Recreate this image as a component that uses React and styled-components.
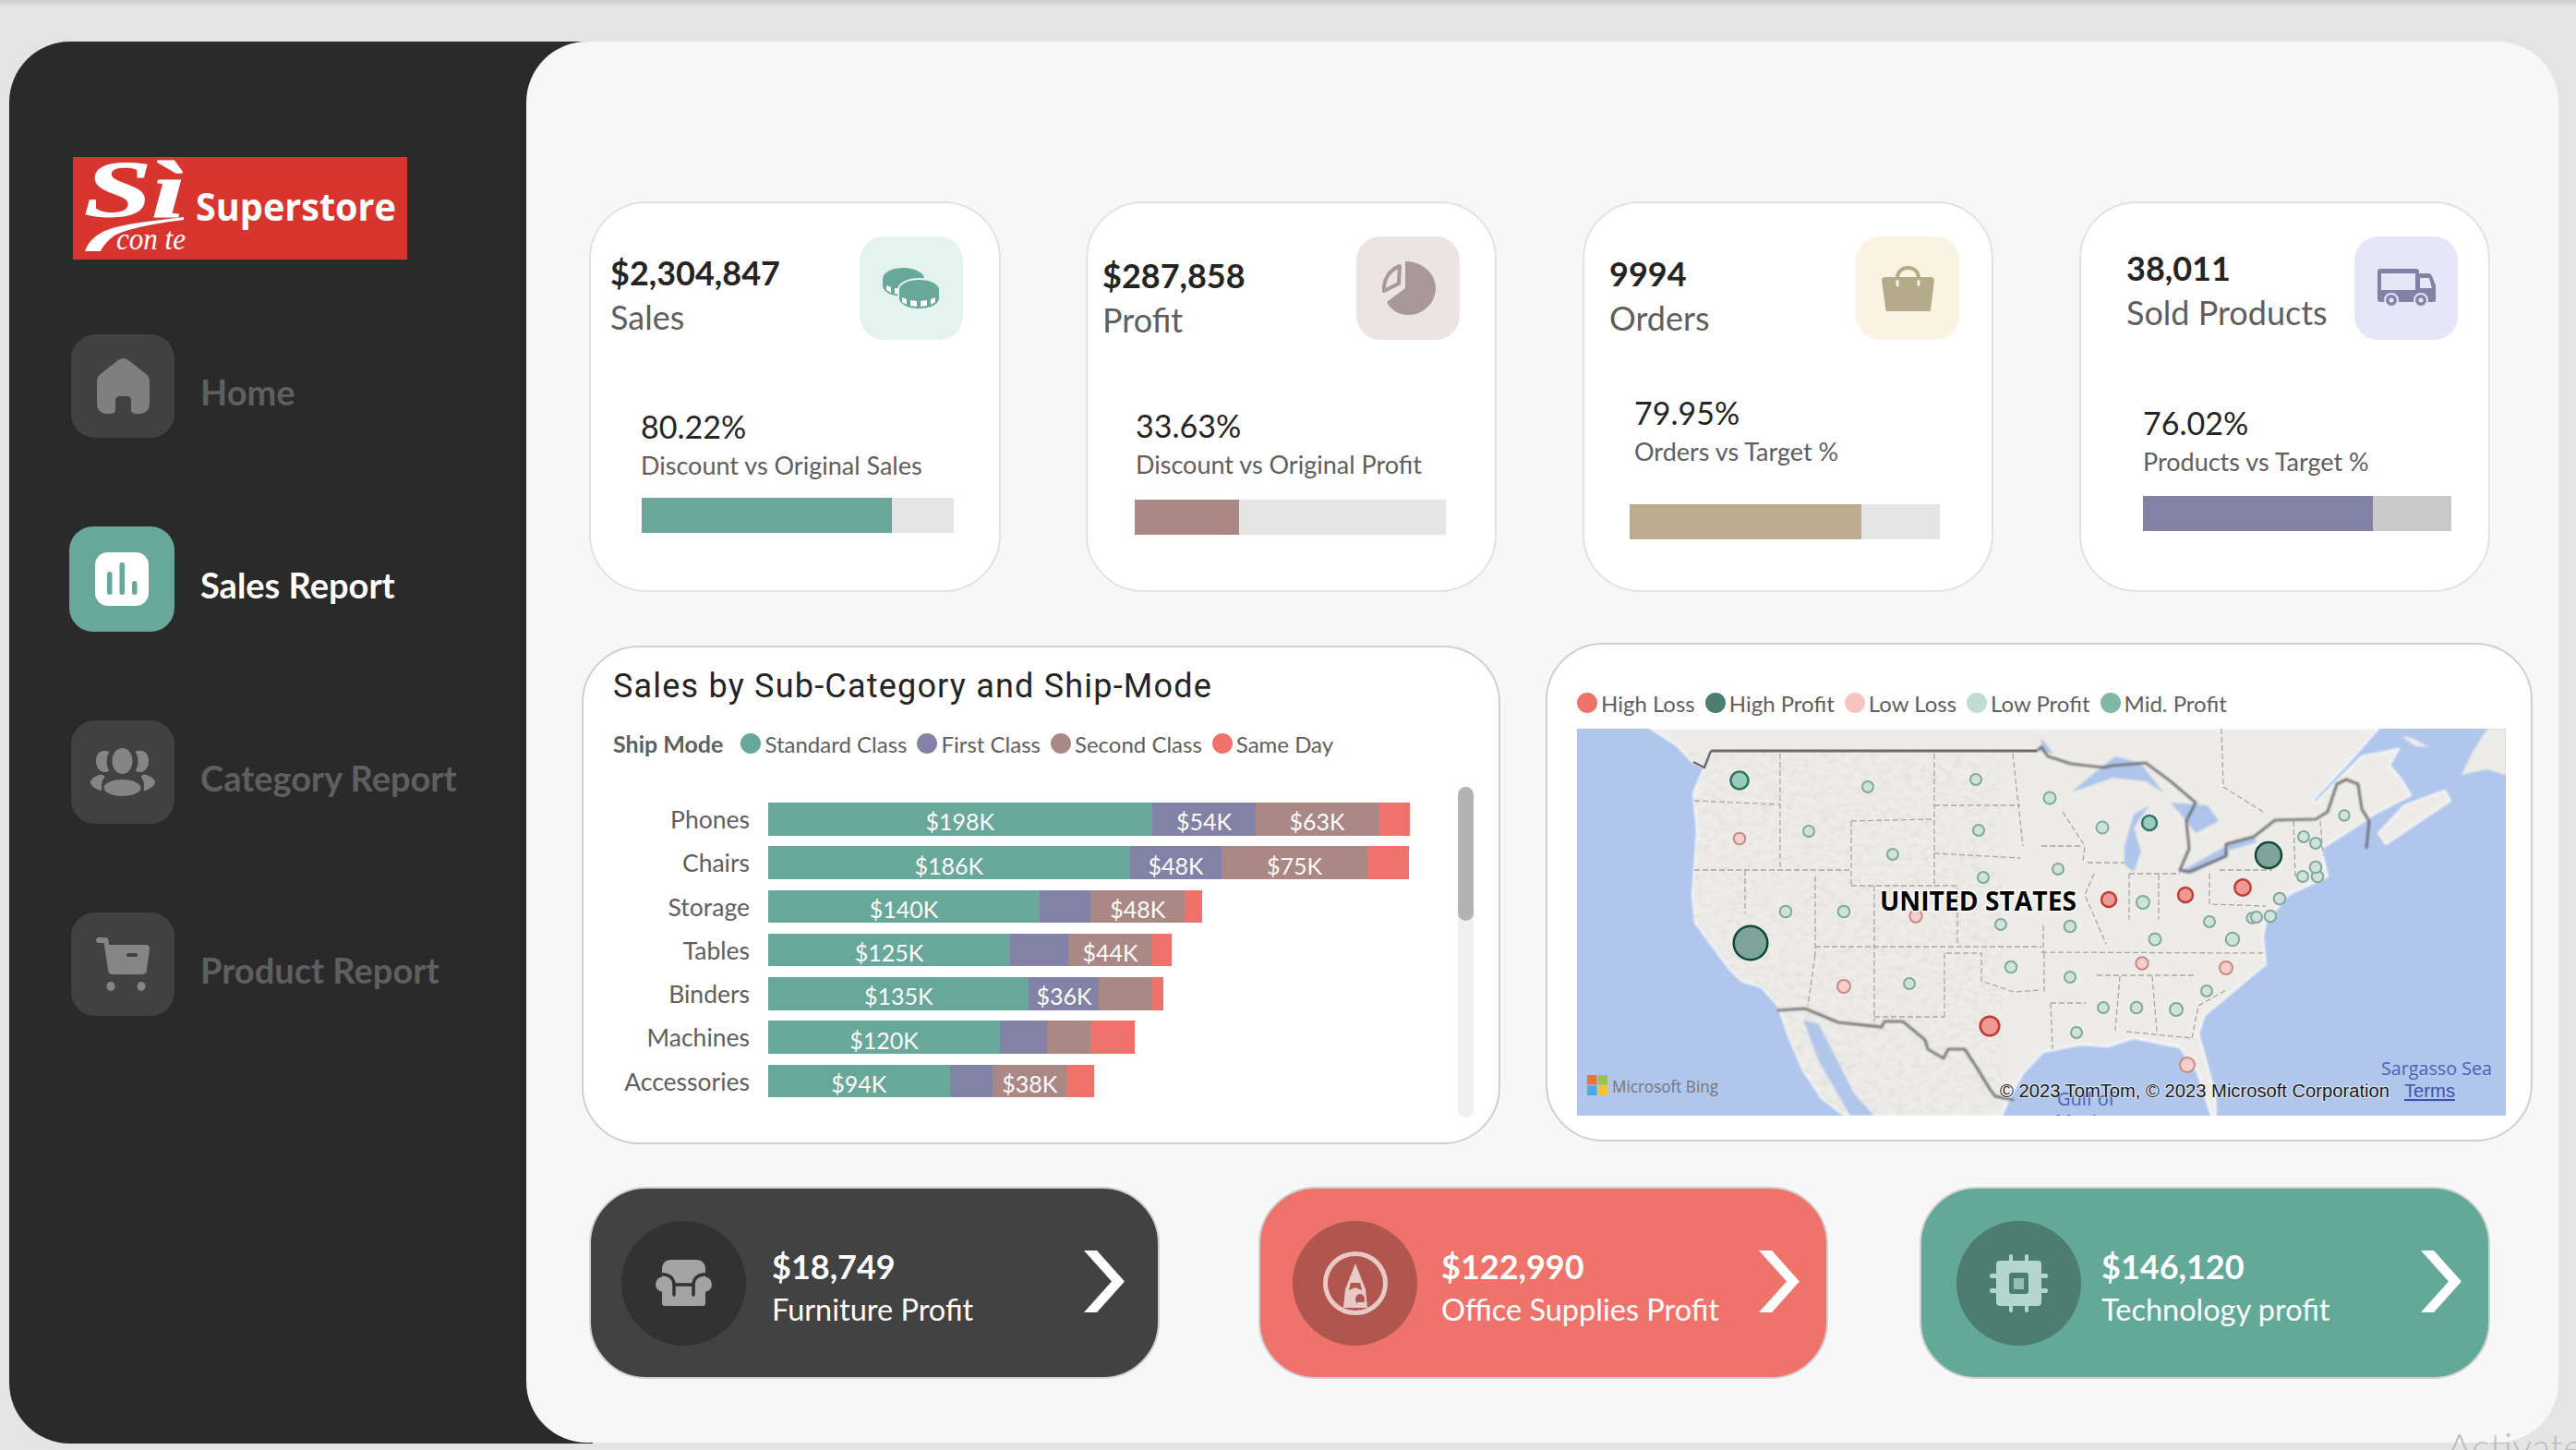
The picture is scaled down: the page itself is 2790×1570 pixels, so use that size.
import styled, { createGlobalStyle } from 'styled-components';

const GlobalStyle = createGlobalStyle`
  html, body {
    margin: 0;
    padding: 0;
    background: #e4e4e4;
  }
  * {
    box-sizing: border-box;
  }
`;

const FONT = "Lato, 'Open Sans', sans-serif";

const SPage = styled.div`
  position: relative;
  display: flex;
  width: 2790px;
  height: 1570px;
  padding: 45px 0 0 10px;
  overflow: hidden;
  font-family: ${FONT};
  background: linear-gradient(#cbcbcb 0, #e4e4e4 7px);
`;

const SSidebar = styled.aside`
  flex: none;
  width: 632px;
  height: 1518px;
  padding: 125px 0 0 69px;
  background: #2a2a2a;
  border-radius: 66px 0 0 66px;
`;

const SLogo = styled.svg`
  display: block;
  width: 362px;
  height: 111px;
  margin-bottom: 81px;
  overflow: visible;
`;

const SNavList = styled.nav`
  display: flex;
  flex-direction: column;
  gap: 96px;
`;

const SNavItem = styled.div`
  display: flex;
  align-items: center;
  gap: 28px;
  margin-left: ${(p) => (p.$active ? '-4px' : '-2px')};
`;

const STile = styled.div`
  display: flex;
  align-items: center;
  justify-content: center;
  width: ${(p) => (p.$active ? '114px' : '112px')};
  height: ${(p) => (p.$active ? '114px' : '112px')};
  background: ${(p) => (p.$active ? '#68a89a' : '#414141')};
  border-radius: 26px;
`;

const SNavText = styled.span`
  padding-top: 11px;
  font-size: 38px;
  font-weight: 700;
  color: ${(p) => (p.$active ? '#ffffff' : '#5f5f5f')};
`;

const SMain = styled.main`
  flex: none;
  width: 2201px;
  height: 1517px;
  margin-left: -72px;
  padding-top: 173px;
  background: #f7f7f7;
  border-radius: 66px;
`;

const SKpiRow = styled.section`
  display: flex;
  padding-left: 68px;
`;

const SKpiCard = styled.article`
  flex: none;
  width: ${(p) => p.$width}px;
  height: 423px;
  margin-left: ${(p) => p.$gap}px;
  background: #ffffff;
  border: 2px solid #e2e2e2;
  border-radius: 62px;
`;

const SKpiHead = styled.div`
  display: flex;
  justify-content: space-between;
  padding: 36px ${(p) => p.$right}px 0 ${(p) => p.$left}px;
`;

const SKpiTitle = styled.div`
  margin-top: ${(p) => p.$top}px;
`;

const SKpiValue = styled.div`
  font-size: 36px;
  line-height: 48px;
  font-weight: 700;
  color: #252423;
`;

const SKpiLabel = styled.div`
  font-size: 36px;
  line-height: 48px;
  color: #605e5c;
`;

const SKpiIcon = styled.div`
  display: flex;
  flex: none;
  align-items: center;
  justify-content: center;
  width: 112px;
  height: 112px;
  background: ${(p) => p.$bg};
  border-radius: 26px;
`;

const SKpiBody = styled.div`
  margin: ${(p) => p.$top}px 0 0 ${(p) => p.$left}px;
`;

const SKpiPercent = styled.div`
  font-size: 34px;
  line-height: 44px;
  color: #252423;
`;

const SKpiSub = styled.div`
  font-size: 27px;
  line-height: 40px;
  color: #605e5c;
`;

const SBarTrack = styled.div`
  width: ${(p) => p.$width}px;
  height: 38px;
  margin: ${(p) => p.$top}px 0 0 ${(p) => p.$left}px;
  background: ${(p) => p.$track};
`;

const SBarFill = styled.div`
  height: 100%;
  background: ${(p) => p.$color};
`;

const SMiddleRow = styled.section`
  display: flex;
  align-items: flex-start;
  gap: 49px;
  margin-top: 55px;
  padding-left: 60px;
`;

const SPanel = styled.article`
  flex: none;
  height: 540px;
  background: #ffffff;
  border: 2px solid #cfcfcf;
  border-radius: 62px;
`;

const SChartPanel = styled(SPanel)`
  width: 995px;
  margin-top: 3px;
  padding: 20px 0 0 32px;
`;

const SChartTitle = styled.h2`
  margin: 0;
  font-family: Roboto, sans-serif;
  font-size: 36px;
  line-height: 44px;
  font-weight: 400;
  letter-spacing: 1.2px;
  color: #252423;
`;

const SLegend = styled.div`
  display: flex;
  align-items: center;
  height: 30px;
  margin-top: ${(p) => p.$top || 0}px;
  font-size: 24px;
  color: #605e5c;
`;

const SLegendTitle = styled.span`
  margin-right: 19px;
  font-size: 25px;
  font-weight: 700;
`;

const SLegendItem = styled.span`
  display: flex;
  align-items: center;
  gap: 4px;
  margin-right: 11px;
  white-space: nowrap;
`;

const SDot = styled.i`
  display: block;
  width: 22px;
  height: 22px;
  background: ${(p) => p.$color};
  border-radius: 50%;
`;

const SChartBody = styled.div`
  display: flex;
  margin: 32px 0 0 -32px;
`;

const SPlot = styled.div`
  display: grid;
  grid-auto-rows: 35.5px;
  row-gap: 11.8px;
  width: 947px;
  padding-top: 17px;
`;

const SPlotRow = styled.div`
  display: flex;
  align-items: stretch;
`;

const SRowLabel = styled.span`
  flex: none;
  width: 180px;
  margin-right: 20px;
  font-size: 26.5px;
  line-height: 37px;
  text-align: right;
  color: #605e5c;
`;

const SSegment = styled.div`
  display: flex;
  align-items: center;
  justify-content: center;
  padding-top: 5px;
  font-size: 25px;
  color: #ffffff;
  background: ${(p) => p.$color};
`;

const SScrollTrack = styled.div`
  flex: none;
  width: 17px;
  height: 358px;
  background: #f0f0f0;
  border-radius: 9px;
`;

const SScrollThumb = styled.div`
  height: 145px;
  background: #b3b3b3;
  border-radius: 9px;
`;

const SMapPanel = styled(SPanel)`
  width: 1069px;
  padding: 48px 0 0 32px;
`;

const SMapSvg = styled.svg`
  display: block;
  width: 1006px;
  height: 419px;
  margin-top: 13px;
`;

const SBottomRow = styled.section`
  display: flex;
  margin-top: 46px;
  padding-left: 68px;
`;

const SProfitCard = styled.article`
  display: flex;
  flex: none;
  align-items: center;
  width: ${(p) => p.$width}px;
  height: 208px;
  margin-left: ${(p) => p.$gap}px;
  padding: 0 ${(p) => p.$right}px 0 ${(p) => p.$left}px;
  color: #ffffff;
  background: ${(p) => p.$bg};
  border: 2px solid #cfcfcf;
  border-radius: 62px;
`;

const SProfitCircle = styled.div`
  display: flex;
  flex: none;
  align-items: center;
  justify-content: center;
  width: 135px;
  height: 135px;
  background: ${(p) => p.$bg};
  border-radius: 50%;
`;

const SProfitText = styled.div`
  flex: 1;
  margin: 9px 0 0 ${(p) => p.$gap}px;
`;

const SProfitValue = styled.div`
  font-size: 36px;
  line-height: 47px;
  font-weight: 700;
`;

const SProfitLabel = styled.div`
  font-size: 32.5px;
  line-height: 45px;
`;

const SChevron = styled.svg`
  display: block;
  flex: none;
  width: 44px;
  height: 67px;
  margin-bottom: 3px;
`;

const SWatermark = styled.div`
  position: absolute;
  left: 2650px;
  top: 1541px;
  font-size: 42px;
  font-weight: 300;
  color: #bdbdbd;
`;

const HomeIcon = () => (
  <svg width="57" height="60" viewBox="0 0 57 60">
    <path fill="#7f7f7f" d="M28.5 0C31 0 32 1 34 2L52 16C55 18 57 21 57 25V49C57 56 52 60 46 60H42C39 60 37 58 37 56V46C37 42 35 41 32 41H25C22 41 20 43 20 46V56C20 58 18 60 15 60H11C5 60 0 56 0 49V25C0 21 2 18 5 16L23 2C25 1 26 0 28.5 0Z" />
  </svg>
);

const ChartIcon = () => (
  <svg width="58" height="58" viewBox="0 0 58 58">
    <rect width="58" height="58" rx="14" fill="#ffffff" />
    <rect x="13" y="21" width="5.5" height="25" rx="2.5" fill="#68a89a" />
    <rect x="26.5" y="11" width="5.5" height="35" rx="2.5" fill="#68a89a" />
    <rect x="40" y="31" width="5.5" height="15" rx="2.5" fill="#68a89a" />
  </svg>
);

const UsersIcon = () => (
  <svg width="70" height="52" viewBox="0 0 70 52" fill="#858585">
    <ellipse cx="34.5" cy="14" rx="11" ry="14" />
    <ellipse cx="34.5" cy="43" rx="20" ry="9" />
    <path d="M14 3C9 3 6 8 6 14S9 25 14 26C20 26 21 25 19 22C17 18 17 9 20 5C21 3 18 3 14 3Z" />
    <path d="M55 3C60 3 63 8 63 14S60 25 55 26C49 26 48 25 50 22C52 18 52 9 49 5C48 3 51 3 55 3Z" />
    <path d="M9 29C4 31 0 34 0 37C0 40 6 45 11 46C13 46 12 44 12 41C12 37 13 34 15 32C16 30 13 28 9 29Z" />
    <path d="M61 29C66 31 70 34 70 37C70 40 64 45 59 46C57 46 58 44 58 41C58 37 57 34 55 32C54 30 57 28 61 29Z" />
  </svg>
);

const CartIcon = () => (
  <svg width="58" height="59" viewBox="0 0 58 59" fill="#858585">
    <path d="M3 0H10C12 0 13 1 13.5 3L14 8H54C57 8 58 10 58 12L55 35C55 38 53 40 50 40H18C15 40 13 38 13 35L8.5 6H3C1 6 0 4.5 0 3S1 0 3 0Z" />
    <rect x="33" y="17" width="12" height="4" rx="2" fill="#414141" />
    <ellipse cx="16" cy="53" rx="4.5" ry="5" />
    <ellipse cx="49" cy="53" rx="4.5" ry="5" />
  </svg>
);

const CoinsIcon = () => (
  <svg width="62" height="45" viewBox="0 0 62 45">
    <path fill="#68a89a" d="M0 12C0 5 10 0 22 0S45 5 45 12V19C45 26 34 31 22 31S0 26 0 19Z" />
    <path fill="#ffffff" d="M4 19L9 21V27L4 24ZM13 22L20 23V29L13 28ZM24 23L31 22V28L24 29Z" />
    <path fill="#68a89a" stroke="#e5f3ee" strokeWidth="2" d="M17 24C17 17 27 12 39.500 12S62 17 62 24V33C62 40 52 45 39.500 45S17 40 17 33Z" />
    <path fill="#ffffff" d="M21 32L26 34V40L21 37ZM30 35L37 36V42L30 41ZM41 36L48 35V41L41 42ZM52 34L57 32V37L52 40Z" />
  </svg>
);

const PieIcon = () => (
  <svg width="59" height="58" viewBox="0 0 59 58">
    <path fill="#a99996" d="M26 0C44 0 59 13 59 29S45 58 30 58C18 58 10 52 6 44L26 29Z" />
    <path fill="none" stroke="#a99996" strokeWidth="4" strokeLinejoin="round" d="M20 5C9 9 2 20 3 32L19 24Z" />
  </svg>
);

const BagIcon = () => (
  <svg width="57" height="49" viewBox="0 0 57 49" fill="#b5aa89">
    <path d="M4 12H53C55 12 57 13 57 15L53 48C53 48.500 52.500 49 52 49H6C5 49 4.500 48.500 4.500 48L0 15C0 13 2 12 4 12Z" />
    <path fill="none" stroke="#b5aa89" strokeWidth="4" d="M17 13C17 6 22 2 28.500 2S40 6 40 13" />
    <rect x="15.500" y="15" width="3" height="7" rx="1.500" fill="#fdf3e2" />
    <rect x="38.500" y="15" width="3" height="7" rx="1.500" fill="#fdf3e2" />
  </svg>
);

const TruckIcon = () => (
  <svg width="63" height="42" viewBox="0 0 63 42" fill="#8182a5">
    <path d="M3 0H42C44 0 45 1 45 3V5H55C57 5 58 6 59 8L63 18V34C63 35 62 36 61 36H3C1 36 0 35 0 33V3C0 1 1 0 3 0Z" />
    <rect x="4" y="5" width="37" height="18" fill="#e5e6f8" />
    <path fill="#e5e6f8" d="M46 10H56L59 21H46Z" />
    <circle cx="15" cy="34" r="7" stroke="#e5e6f8" strokeWidth="2" />
    <circle cx="47" cy="34" r="7" stroke="#e5e6f8" strokeWidth="2" />
    <circle cx="15" cy="34" r="2.500" fill="#e5e6f8" />
    <circle cx="47" cy="34" r="2.500" fill="#e5e6f8" />
  </svg>
);

const ChairIcon = () => (
  <svg width="61" height="50" viewBox="0 0 61 50" fill="#a3a3a3">
    <path d="M17 0H44C50 0 54 4 54 10V47C54 49 53 50 51 50H10C8 50 7 49 7 47V10C7 4 11 0 17 0Z" />
    <circle cx="8.300" cy="26.700" r="8.300" />
    <circle cx="52.700" cy="26.700" r="8.300" />
    <path d="M5 15.700C14 15 20 20 20 27V38M20 27H41M56 15.700C47 15 41 20 41 27V38" fill="none" stroke="#323232" strokeWidth="3.500" strokeLinecap="round" />
  </svg>
);

const NibIcon = () => (
  <svg width="70" height="69" viewBox="0 0 70 69" fill="#e8c9c5">
    <ellipse cx="35" cy="34.500" rx="32.500" ry="32" fill="none" stroke="#e8c9c5" strokeWidth="5" />
    <path d="M35 13L46 41L48 61H22L24 41Z" />
    <path fill="#b0564e" d="M30 34H40L42 42L35 39L28 42Z" />
    <ellipse cx="40" cy="52" rx="5" ry="6" fill="#b0564e" />
    <path d="M37 55H44V61H37Z" />
  </svg>
);

const ChipIcon = () => (
  <svg width="63" height="63" viewBox="0 0 63 63" fill="#b5d6ce">
    <rect x="7" y="7" width="49" height="49" rx="4" />
    <rect x="21" y="0" width="4" height="8" rx="2" />
    <rect x="38" y="0" width="4" height="8" rx="2" />
    <rect x="21" y="55" width="4" height="8" rx="2" />
    <rect x="38" y="55" width="4" height="8" rx="2" />
    <rect x="0" y="21" width="8" height="5" rx="2" />
    <rect x="0" y="37" width="8" height="5" rx="2" />
    <rect x="55" y="21" width="8" height="5" rx="2" />
    <rect x="55" y="37" width="8" height="5" rx="2" />
    <rect x="21" y="20" width="21" height="23" rx="3" fill="#4c7d70" />
    <rect x="26" y="26" width="11" height="12" fill="#94bfb3" />
  </svg>
);

const Chevron = () => (
  <SChevron viewBox="0 0 44 67">
    <path fill="#ffffff" d="M0 0H14L44 33.500L14 67H0L30 33.500Z" />
  </SChevron>
);

const Logo = () => (
  <SLogo viewBox="0 0 362 111">
    <rect width="362" height="111" fill="#d8352f" />
    <text x="12" y="64" fontFamily="'Liberation Serif', serif" fontStyle="italic" fontWeight="700" fontSize="86" fill="#ffffff" stroke="#ffffff" strokeWidth="1" textLength="110" lengthAdjust="spacingAndGlyphs">Sì</text>
    <path fill="#ffffff" d="M13 102C18 88 30 78 60 73C85 69 105 67 120 65L120 68C90 72 60 77 45 85C38 90 32 97 30 102Z" />
    <text x="47" y="100" fontFamily="'Liberation Serif', serif" fontStyle="italic" fontSize="34" fill="#ffffff" textLength="75" lengthAdjust="spacingAndGlyphs">con te</text>
    <text x="133" y="69" fontFamily="'Open Sans', sans-serif" fontWeight="700" fontSize="41" fill="#ffffff" textLength="217" lengthAdjust="spacingAndGlyphs">Superstore</text>
  </SLogo>
);

const NAV = [
  { label: 'Home', icon: <HomeIcon /> },
  { label: 'Sales Report', icon: <ChartIcon />, active: true },
  { label: 'Category Report', icon: <UsersIcon /> },
  { label: 'Product Report', icon: <CartIcon /> },
];

const KPIS = [
  { value: '$2,304,847', label: 'Sales', pct: 80.22, fill: 80.22, sub: 'Discount vs Original Sales', icon: <CoinsIcon />, tile: '#e5f3ee', color: '#6aa699', track: '#e5e5e5', width: 446, gap: 0, left: 21, right: 39, top: 15, bodyTop: 72, bodyLeft: 54, barTop: 15, barLeft: 55, barWidth: 338 },
  { value: '$287,858', label: 'Profit', pct: 33.63, fill: 33.63, sub: 'Discount vs Original Profit', icon: <PieIcon />, tile: '#ebe4e2', color: '#aa8885', track: '#e5e5e5', width: 445, gap: 92, left: 16, right: 38, top: 18, bodyTop: 69, bodyLeft: 52, barTop: 18, barLeft: 51, barWidth: 337 },
  { value: '9994', label: 'Orders', pct: 79.95, fill: 74.7, sub: 'Orders vs Target %', icon: <BagIcon />, tile: '#fdf3e2', color: '#bbac8d', track: '#e5e5e5', width: 445, gap: 93, left: 27, right: 35, top: 16, bodyTop: 57, bodyLeft: 54, barTop: 37, barLeft: 49, barWidth: 336 },
  { value: '38,011', label: 'Sold Products', pct: 76.02, fill: 74.5, sub: 'Products vs Target %', icon: <TruckIcon />, tile: '#e5e6f8', color: '#8182a5', track: '#c9c9c9', width: 445, gap: 93, left: 49, right: 33, top: 10, bodyTop: 68, bodyLeft: 67, barTop: 17, barLeft: 67, barWidth: 334 },
];

const SHIP = [
  { label: 'Standard Class', color: '#68a89a' },
  { label: 'First Class', color: '#8182a5' },
  { label: 'Second Class', color: '#aa8885' },
  { label: 'Same Day', color: '#ef736a' },
];

const BARS = [
  { name: 'Phones', parts: [[415.7, '$198K'], [112.6, '$54K'], [132.7, '$63K'], [34.5]] },
  { name: 'Chairs', parts: [[391.7, '$186K'], [99.5, '$48K'], [157.5, '$75K'], [45.5]] },
  { name: 'Storage', parts: [[294, '$140K'], [55.3], [102.1, '$48K'], [18.2]] },
  { name: 'Tables', parts: [[262.2, '$125K'], [62.5], [91.7, '$44K'], [20.2]] },
  { name: 'Binders', parts: [[282.4, '$135K'], [76.1, '$36K'], [57.3], [12.4]] },
  { name: 'Machines', parts: [[251.1, '$120K'], [51.4], [46.8], [48.1]] },
  { name: 'Accessories', parts: [[196.5, '$94K'], [46.8], [80, '$38K'], [29.3]] },
];

const MAP_LEGEND = [
  { label: 'High Loss', color: '#ef736a' },
  { label: 'High Profit', color: '#4c7d70' },
  { label: 'Low Loss', color: '#f7c4c0' },
  { label: 'Low Profit', color: '#bfddd5' },
  { label: 'Mid. Profit', color: '#80b8a6' },
];

const BUBBLE_STYLE = {
  low: { fill: '#cfe2dc', stroke: '#7fa99c', sw: 2 },
  mid: { fill: '#9accbd', stroke: '#2e7563', sw: 2.5 },
  big: { fill: '#7fa59a', stroke: '#0f4a3c', sw: 2.5 },
  lowLoss: { fill: '#f4cfcc', stroke: '#c48a87', sw: 2 },
  highLoss: { fill: '#ee9a94', stroke: '#c23b32', sw: 2.5 },
};

// [x, y, r] in the map's own pixels
const bubbles = (kind, list) => list.map(([x, y, r]) => ({ kind, x, y, r }));
const BUBBLES = [
  ...bubbles('low', [[315, 63, 6], [432, 55, 6], [435, 110, 6], [342, 136, 6], [440, 161, 6], [251, 111, 6], [226, 198, 6.300], [289, 198, 6.300], [459, 212, 6], [470, 258, 6.300], [360, 276, 6],
    [512, 75, 6.500], [569, 107, 6.500], [521, 152, 6], [613, 188, 7], [534, 214, 6.300], [626, 228, 6.500], [685, 209, 6], [710, 228, 7.300], [534, 269, 6], [570, 302, 6], [606, 302, 6.300], [649, 304, 7], [682, 284, 6], [541, 329, 6], [731, 205, 5.700], [736, 204, 6], [751, 203, 6.300], [761, 184, 6.300], [786, 160, 6], [802, 160, 6.300], [800, 150, 6.300], [787, 117, 6], [800, 124, 6], [831, 94, 5.700]]),
  ...bubbles('mid', [[176, 56, 9.500], [620, 102, 8]]),
  ...bubbles('big', [[188, 232, 18.300], [749, 137, 14]]),
  ...bubbles('lowLoss', [[176, 119, 6.300], [367, 203, 6.700], [289, 279, 7], [612, 254, 6.700], [703, 259, 7], [661, 364, 8]]),
  ...bubbles('highLoss', [[447, 322, 10.300], [576, 185, 8], [659, 180, 8], [721, 172, 8.700]]),
];

const COAST = 'M80 0L108 18L125 36L138 42L126 70L130 110L128 140L125 180L128 210L150 240L165 260L178 273L200 280L218 300L228 330L245 370L265 400L290 419H460L467 403L483 373L505 350L545 342L575 344L603 335L653 345L672 372L687 419H692L691 395L673 330L680 310L710 285L746 255L743 225L746 210L770 180L813 160L806 130L853 100L864 92L903 72L893 55L880 40L890 22L850 30L800 80L796 78L836 36L868 0Z';

const NOVA_SCOTIA = 'M868 113L876 125L946 78L940 67L896 83Z';

const LAKES = [
  'M536 68L563 46L583 30L610 37L636 70L616 57L580 53L553 63Z',
  'M593 147L593 127L603 93L620 83L603 107L611 133L603 155Z',
  'M643 80L683 83L695 100L670 113L660 100Z',
  'M653 155L703 127L706 137L666 157Z',
  'M703 125L733 117L736 123L706 132Z',
  'M503 10L516 27L503 25Z',
];

const BORDER_NORTH = 'M498 24L503 20L510 30L535 38L570 42L580 40L616 37L643 57L670 80L660 100L663 130L653 153L663 155L703 138L703 125L733 117L756 99L800 98L813 90L823 60L833 55L846 60L850 87L858 100L855 130';
const BORDER_SOUTH = 'M217 305L247 303L283 318L330 323L333 317L353 317L377 337L380 347L397 357L402 347L420 347L433 367L447 390L453 398L473 402';

const STATE_LINES = [
  'M220 27V153', 'M127 153H297', 'M127 78L220 82', 'M182 153V200', 'M258 160V245', 'M297 100V170', 'M297 100L387 98', 'M387 27V170',
  'M297 170H412V233', 'M258 236H503', 'M322 170V317', 'M398 243V312', 'M322 312H398', 'M387 83H480', 'M387 135L480 140', 'M472 27L483 127',
  'M400 243H438V273L473 285L503 283', 'M258 245L250 300', 'M503 127H548', 'M503 242L743 243', 'M553 145H593', 'M598 157H653', 'M598 157V207', 'M630 158V207',
  'M685 157V190L746 192', 'M696 153H753', 'M776 100L778 160', 'M805 100L808 137', 'M698 0L700 63L743 90', 'M505 213V243', 'M506 243V287', 'M513 297H551',
  'M563 267H670', 'M588 268L583 327', 'M623 268L628 328', 'M595 328L666 335', 'M513 297L515 347', 'M666 335L673 300L703 283', 'M526 90L550 127L548 143', 'M560 157L550 180L573 233',
];

const UsMap = () => (
  <SMapSvg viewBox="0 0 1006 419">
    <defs>
      <filter id="mapBlur"><feGaussianBlur stdDeviation="0.8" /></filter>
      <filter id="terrain" x="0" y="0" width="100%" height="100%">
        <feTurbulence type="fractalNoise" baseFrequency="0.11 0.16" numOctaves="3" seed="7" />
        <feColorMatrix values="0 0 0 0 0.6 0 0 0 0 0.59 0 0 0 0 0.57 1.8 0 0 0 -0.8" />
      </filter>
      <clipPath id="landClip"><path d={COAST} /></clipPath>
    </defs>
    <rect width="1006" height="419" fill="#b0c6ed" />
    <path d={COAST} fill="#eeece8" stroke="#fafafa" strokeWidth="2" filter="url(#mapBlur)" />
    <path d={NOVA_SCOTIA} fill="#eeece8" stroke="#fafafa" strokeWidth="2" filter="url(#mapBlur)" />
    <path fill="#b0c6ed" d="M245 315L262 320L300 395L322 419H296L262 360Z" filter="url(#mapBlur)" />
    <path fill="#eeece8" d="M958 50L970 25L986 0H1006V50L985 44Z" filter="url(#mapBlur)" />
    <path fill="#eeece8" d="M893 8L905 10L923 20L908 19Z" filter="url(#mapBlur)" />
    <g clipPath="url(#landClip)">
      <rect x="120" y="25" width="340" height="394" filter="url(#terrain)" opacity="0.4" />
    </g>
    <g filter="url(#mapBlur)">
      {LAKES.map((d) => <path key={d} d={d} fill="#aec4ea" />)}
    </g>
    <g fill="none" stroke="#a9a7a3" strokeWidth="1.300" strokeDasharray="6 3">
      {STATE_LINES.map((d) => <path key={d} d={d} />)}
    </g>
    <path d="M145 24H498" fill="none" stroke="#6b6b6b" strokeWidth="3" />
    <path d="M126 36L138 42L145 24" fill="none" stroke="#6b6b70" strokeWidth="2.400" />
    <path d={BORDER_NORTH} fill="none" stroke="#6b6b70" strokeWidth="2.600" filter="url(#mapBlur)" />
    <path d={BORDER_SOUTH} fill="none" stroke="#6b6b70" strokeWidth="2.600" filter="url(#mapBlur)" />
    {BUBBLES.map((b) => {
      const s = BUBBLE_STYLE[b.kind];
      return <circle key={`${b.x}-${b.y}`} cx={b.x} cy={b.y} r={b.r} fill={s.fill} stroke={s.stroke} strokeWidth={s.sw} />;
    })}
    <text x="328" y="197" fontFamily="'Open Sans', sans-serif" fontWeight="700" fontSize="29" fill="#000000" stroke="#ffffff" strokeWidth="3" paintOrder="stroke" textLength="213" lengthAdjust="spacingAndGlyphs">UNITED STATES</text>
    <rect x="11" y="375" width="10.500" height="10.500" fill="#e8743b" />
    <rect x="22.500" y="375" width="10.500" height="10.500" fill="#9cc14d" />
    <rect x="11" y="386.500" width="10.500" height="10.500" fill="#4aa9e9" />
    <rect x="22.500" y="386.500" width="10.500" height="10.500" fill="#f4c33a" />
    <text x="38" y="394" fontFamily="'Open Sans', sans-serif" fontSize="19" fill="#74747a" textLength="115" lengthAdjust="spacingAndGlyphs">Microsoft Bing</text>
    <text x="871" y="375" fontFamily="'Open Sans', sans-serif" fontSize="20" fill="#4a62b8" textLength="120" lengthAdjust="spacingAndGlyphs">Sargasso Sea</text>
    <text x="520" y="408" fontFamily="'Open Sans', sans-serif" fontSize="20" fill="#4a62b8">Gulf of</text>
    <text x="518" y="432" fontFamily="'Open Sans', sans-serif" fontSize="20" fill="#4a62b8">Mexico</text>
    <text x="458" y="399" fontFamily="'Liberation Sans', sans-serif" fontSize="20.500" fill="#1a1a1a" stroke="#ffffff" strokeWidth="2" strokeOpacity="0.6" paintOrder="stroke" textLength="422" lengthAdjust="spacingAndGlyphs">© 2023 TomTom, © 2023 Microsoft Corporation</text>
    <text x="896" y="399" fontFamily="'Liberation Sans', sans-serif" fontSize="20.500" fill="#3d52a8" textDecoration="underline" textLength="55" lengthAdjust="spacingAndGlyphs">Terms</text>
  </SMapSvg>
);

const PROFITS = [
  { value: '$18,749', label: 'Furniture Profit', icon: <ChairIcon />, bg: '#424242', circle: '#323232', width: 618, gap: 0, left: 33, textGap: 28, right: 36 },
  { value: '$122,990', label: 'Office Supplies Profit', icon: <NibIcon />, bg: '#ef736a', circle: '#b0564e', width: 617, gap: 107, left: 35, textGap: 26, right: 29 },
  { value: '$146,120', label: 'Technology profit', icon: <ChipIcon />, bg: '#63a998', circle: '#4c7d70', width: 618, gap: 99, left: 38, textGap: 22, right: 29 },
];

const App = () => {
  return (
    <SPage>
      <GlobalStyle />
      <SSidebar>
        <Logo />
        <SNavList>
          {NAV.map((item) => (
            <SNavItem key={item.label} $active={item.active}>
              <STile $active={item.active}>{item.icon}</STile>
              <SNavText $active={item.active}>{item.label}</SNavText>
            </SNavItem>
          ))}
        </SNavList>
      </SSidebar>
      <SMain>
        <SKpiRow>
          {KPIS.map((k) => (
            <SKpiCard key={k.label} $width={k.width} $gap={k.gap}>
              <SKpiHead $left={k.left} $right={k.right}>
                <SKpiTitle $top={k.top}>
                  <SKpiValue>{k.value}</SKpiValue>
                  <SKpiLabel>{k.label}</SKpiLabel>
                </SKpiTitle>
                <SKpiIcon $bg={k.tile}>{k.icon}</SKpiIcon>
              </SKpiHead>
              <SKpiBody $top={k.bodyTop} $left={k.bodyLeft}>
                <SKpiPercent>{k.pct}%</SKpiPercent>
                <SKpiSub>{k.sub}</SKpiSub>
              </SKpiBody>
              <SBarTrack $top={k.barTop} $left={k.barLeft} $width={k.barWidth} $track={k.track}>
                <SBarFill $color={k.color} style={{ width: `${k.fill}%` }} />
              </SBarTrack>
            </SKpiCard>
          ))}
        </SKpiRow>
        <SMiddleRow>
          <SChartPanel>
            <SChartTitle>Sales by Sub-Category and Ship-Mode</SChartTitle>
            <SLegend $top={25}>
              <SLegendTitle>Ship Mode</SLegendTitle>
              {SHIP.map((s) => (
                <SLegendItem key={s.label}>
                  <SDot $color={s.color} />
                  {s.label}
                </SLegendItem>
              ))}
            </SLegend>
            <SChartBody>
              <SPlot>
                {BARS.map((row) => (
                  <SPlotRow key={row.name}>
                    <SRowLabel>{row.name}</SRowLabel>
                    {row.parts.map(([w, text], i) => (
                      <SSegment key={i} $color={SHIP[i].color} style={{ width: w }}>{text}</SSegment>
                    ))}
                  </SPlotRow>
                ))}
              </SPlot>
              <SScrollTrack>
                <SScrollThumb />
              </SScrollTrack>
            </SChartBody>
          </SChartPanel>
          <SMapPanel>
            <SLegend>
              {MAP_LEGEND.map((s) => (
                <SLegendItem key={s.label}>
                  <SDot $color={s.color} />
                  {s.label}
                </SLegendItem>
              ))}
            </SLegend>
            <UsMap />
          </SMapPanel>
        </SMiddleRow>
        <SBottomRow>
          {PROFITS.map((p) => (
            <SProfitCard key={p.label} $bg={p.bg} $width={p.width} $gap={p.gap} $left={p.left} $right={p.right}>
              <SProfitCircle $bg={p.circle}>{p.icon}</SProfitCircle>
              <SProfitText $gap={p.textGap}>
                <SProfitValue>{p.value}</SProfitValue>
                <SProfitLabel>{p.label}</SProfitLabel>
              </SProfitText>
              <Chevron />
            </SProfitCard>
          ))}
        </SBottomRow>
      </SMain>
      <SWatermark>Activate</SWatermark>
    </SPage>
  );
};

export default App;
